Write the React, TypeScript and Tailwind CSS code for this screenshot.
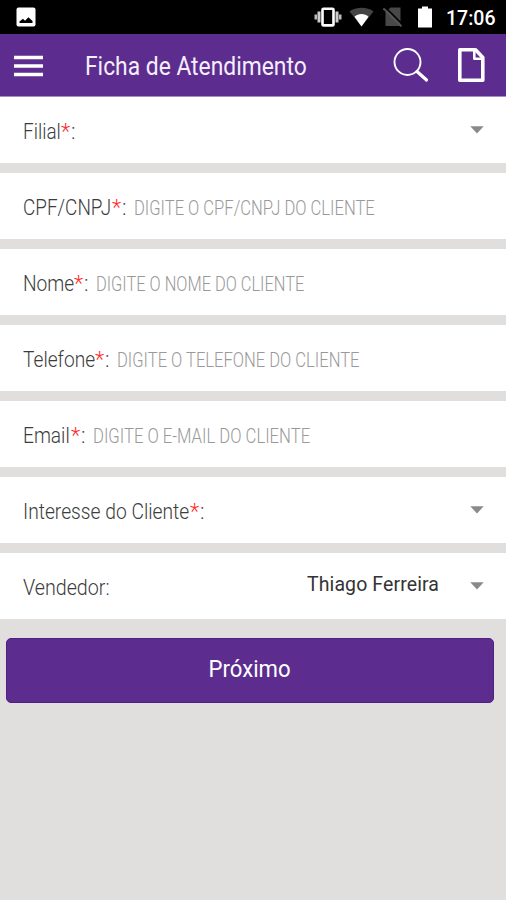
const Caret = () => (
  <svg className="h-[8px] w-[14px] shrink-0" viewBox="0 0 14 8">
    <path d="M0.3 0.3H13.7L7 7.5Z" fill="#8a8a8a" />
  </svg>
);

const StatusBar = () => {
  return (
    <div className="flex h-[34px] items-center bg-black pl-4 pr-[10px] text-white">
      <svg className="h-5 w-5" viewBox="0 0 20 20">
        <rect x="0.5" y="0.5" width="19" height="19" rx="2" fill="#fff" />
        <path d="M3.5 16V14.5L7 11.8L9 13.8L12.4 10.2L16.5 14V16Z" fill="#000" />
      </svg>

      <div className="ml-auto flex items-center">
        {/* Vibrate */}
        <svg className="h-5 w-[28px]" viewBox="0 0 28 20">
          <rect x="8.5" y="1.8" width="11" height="16.6" rx="1" fill="none" stroke="#fff" strokeWidth="2.6" />
          <path d="M5 4.5V15.5M23 4.5V15.5" stroke="#ccc" strokeWidth="3" />
          <path d="M1.8 7.5V12.5M26.2 7.5V12.5" stroke="#bbb" strokeWidth="2.6" />
        </svg>
        {/* Wifi */}
        <svg className="ml-[7px] h-5 w-[25px]" viewBox="0 0 25 20">
          <path d="M0.5 4.5C7 -0.5 18 -0.5 24.5 4.5L12.5 19.5Z" fill="#444" />
          <path d="M5.5 9.8C9 6.2 16 6.2 19.5 9.8L12.5 19.5Z" fill="#fff" />
        </svg>
        {/* No sim */}
        <svg className="ml-[9px] h-5 w-[20px]" viewBox="0 0 20 20">
          <path d="M7.5 0.5H17.5V19H2.5V5.5Z" fill="#484848" />
          <path d="M1.5 -0.5L20 18" stroke="#000" strokeWidth="1.6" />
          <path d="M0.5 1.5L18.5 19.5" stroke="#555" strokeWidth="1.8" />
        </svg>
        {/* Battery */}
        <svg className="ml-[15px] h-[22px] w-[14px]" viewBox="0 0 14 22">
          <path d="M4 0.5H10V2.5H14V21.5H0V2.5H4Z" fill="#fff" />
        </svg>
        <span className="ml-[14px] w-[50px] whitespace-nowrap pt-[3px] text-[19.5px] font-medium leading-[31px]">
          17:06
        </span>
      </div>
    </div>
  );
};

const Header = () => {
  return (
    <header className="flex h-[63px] items-center border-b border-[#a98bc8] bg-[#5c2d8f] text-white">
      <svg className="ml-[14px] mt-px h-[22px] w-[29px]" viewBox="0 0 29 22">
        <path d="M0 2.5H29M0 11H29M0 19.5H29" stroke="#fff" strokeWidth="3.4" />
      </svg>
      <h1 className="ml-[42px] w-[223px] whitespace-nowrap pt-[3px] text-[25px] font-normal leading-[58px] text-[#f4effa]">
        <span className="inline-block origin-left scale-x-[0.913]">Ficha de Atendimento</span>
      </h1>
      <svg className="ml-[85px] h-[36px] w-[36px]" viewBox="0 0 36 36" fill="none" stroke="#fff">
        <circle cx="14.5" cy="15" r="13" strokeWidth="1.9" />
        <path d="M24 24.5L33.5 33" strokeWidth="3.2" strokeLinecap="round" />
      </svg>
      <svg className="ml-[28px] h-[36px] w-[28px]" viewBox="0 0 28 36" fill="none" stroke="#fff" strokeWidth="3.6" strokeLinejoin="round">
        <path d="M2.8 2.7H18.5L25.8 10.5V33.3H2.8Z" />
        <path d="M17.3 2.7V11.8H25.8" strokeWidth="2.6" />
      </svg>
    </header>
  );
};

type Field = {
  label: string;
  labelWidth: string;
  labelScale: string;
  required?: boolean;
  placeholder?: string;
  placeholderScale?: string;
  value?: string;
  select?: boolean;
};

const fields: Field[] = [
  { label: "Filial", labelWidth: "w-[38px]", labelScale: "scale-x-[0.88]", required: true, select: true },
  {
    label: "CPF/CNPJ",
    labelWidth: "w-[89px]",
    labelScale: "scale-x-[0.88]",
    required: true,
    placeholder: "DIGITE O CPF/CNPJ DO CLIENTE",
    placeholderScale: "scale-x-[0.828]",
  },
  {
    label: "Nome",
    labelWidth: "w-[51px]",
    labelScale: "scale-x-[0.89]",
    required: true,
    placeholder: "DIGITE O NOME DO CLIENTE",
    placeholderScale: "scale-x-[0.82]",
  },
  {
    label: "Telefone",
    labelWidth: "w-[72px]",
    labelScale: "scale-x-[0.89]",
    required: true,
    placeholder: "DIGITE O TELEFONE DO CLIENTE",
    placeholderScale: "scale-x-[0.828]",
  },
  {
    label: "Email",
    labelWidth: "w-[48px]",
    labelScale: "scale-x-[0.89]",
    required: true,
    placeholder: "DIGITE O E-MAIL DO CLIENTE",
    placeholderScale: "scale-x-[0.833]",
  },
  {
    label: "Interesse do Cliente",
    labelWidth: "w-[167px]",
    labelScale: "scale-x-[0.895]",
    required: true,
    select: true,
  },
  {
    label: "Vendedor:",
    labelWidth: "w-[86px]",
    labelScale: "scale-x-[0.915]",
    value: "Thiago Ferreira",
    select: true,
  },
];

const FieldRow = ({ label, labelWidth, labelScale, required, placeholder, placeholderScale, value, select }: Field) => {
  return (
    <div className="flex h-[66px] items-center whitespace-nowrap bg-white pl-[23px] pr-[22px] pt-[4px] text-[21.5px] font-light leading-[30px] text-[#3c3c3c]">
      <span className={`${labelWidth} shrink-0`}>
        <span className={`inline-block origin-left ${labelScale}`}>{label}</span>
      </span>
      {required && (
        <>
          <span className="w-[10px] shrink-0 text-[#ff2a2a]">*</span>
          <span className="w-[12px] shrink-0">:</span>
        </>
      )}
      {placeholder && (
        <span className="w-[245px] text-[20px] text-[#999]">
          <span className={`inline-block origin-left ${placeholderScale}`}>{placeholder}</span>
        </span>
      )}
      {value && (
        <span className="ml-auto mr-[30px] -mt-[6px] w-[133px] text-[19.5px] font-normal tracking-[0.1px] text-[#333]">
          {value}
        </span>
      )}
      {select && (
        <span className={value ? "-mt-[4px] flex" : "-mt-[4px] ml-auto flex"}>
          <Caret />
        </span>
      )}
    </div>
  );
};

const App = () => {
  return (
    <div className="flex h-[900px] w-[506px] flex-col overflow-hidden bg-[#e0dfde] font-['Roboto',sans-serif]">
      <StatusBar />
      <Header />
      <main className="flex flex-col gap-[10px]">
        {fields.map((field) => (
          <FieldRow key={field.label} {...field} />
        ))}
      </main>
      <button className="ml-[6px] mt-[19px] h-[65px] w-[488px] rounded-[5px] border border-[#502080] bg-[#5c2d8f] pb-px text-[23.5px] font-normal text-white">
        <span className="inline-block scale-x-[0.94]">Próximo</span>
      </button>
    </div>
  );
};

export default App;
